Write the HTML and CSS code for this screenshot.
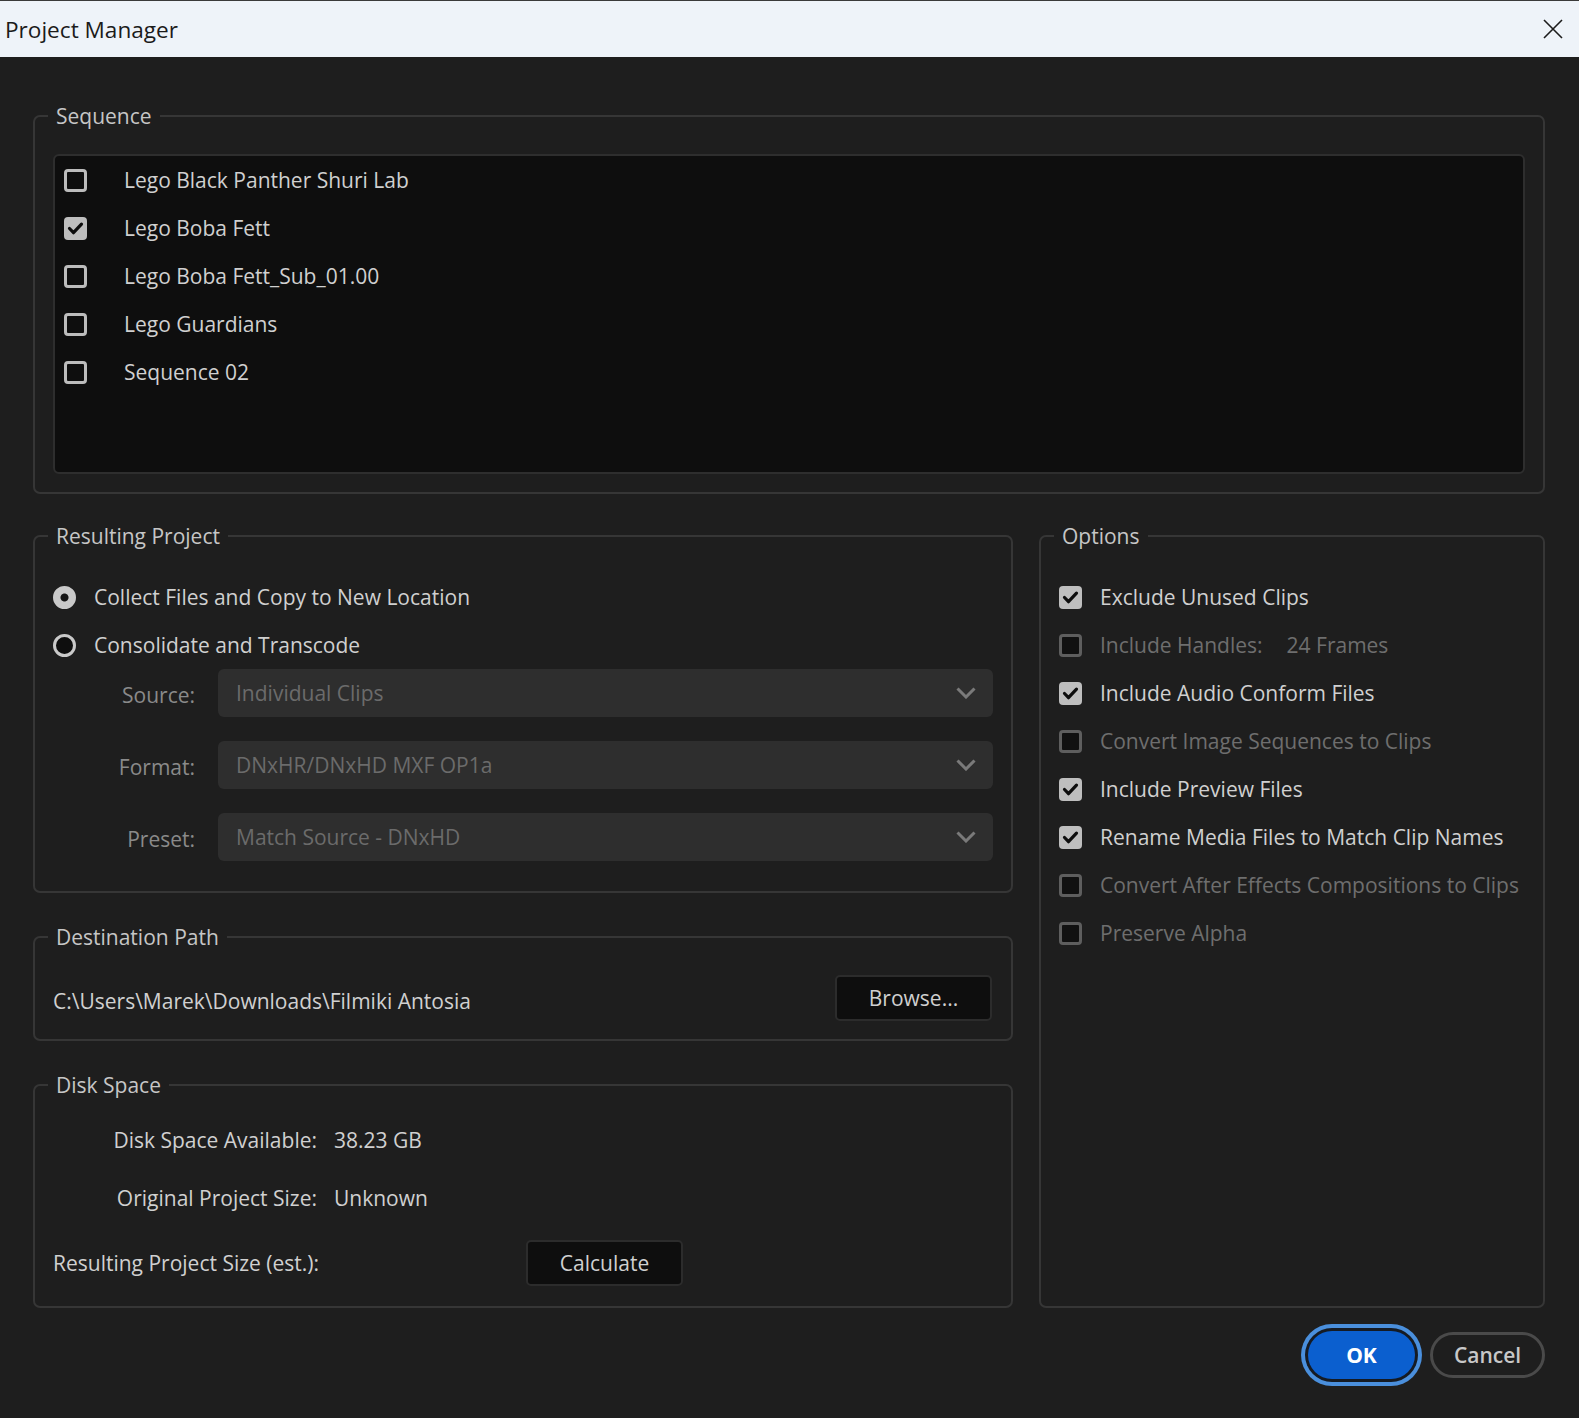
FILE: index.html
```html
<!DOCTYPE html>
<html lang="en">
<head>
  <meta charset="UTF-8" />
  <meta name="viewport" content="width=device-width, initial-scale=1" />
  <title>Project Manager</title>
  <link rel="stylesheet" href="styles.css">
</head>
<body>
  <div class="titlebar">
    <span class="title">Project Manager</span>
    <svg class="close" viewBox="0 0 20 20" width="20" height="20">
      <path d="M1 1L19 19M19 1L1 19" />
    </svg>
  </div>

  <div class="dialog">
    <fieldset class="group seq">
      <legend>Sequence</legend>
      <div class="seq-list">
        <div class="seq-row"><span class="cb"></span><span>Lego Black Panther Shuri Lab</span></div>
        <div class="seq-row"><span class="cb checked"><svg viewBox="0 0 23 23"><path d="M5.5 11.5l4 4.2 8-8.6" /></svg></span><span>Lego Boba Fett</span></div>
        <div class="seq-row"><span class="cb"></span><span>Lego Boba Fett_Sub_01.00</span></div>
        <div class="seq-row"><span class="cb"></span><span>Lego Guardians</span></div>
        <div class="seq-row"><span class="cb"></span><span>Sequence 02</span></div>
      </div>
    </fieldset>

    <div class="lower">
      <div class="left-col">
        <fieldset class="group result">
          <legend>Resulting Project</legend>
          <div class="radio-row"><span class="radio on"></span><span>Collect Files and Copy to New Location</span></div>
          <div class="radio-row"><span class="radio"></span><span>Consolidate and Transcode</span></div>
          <div class="field-row">
            <span class="field-label">Source:</span>
            <div class="select"><span>Individual Clips</span><svg class="chev" viewBox="0 0 20 12"><path d="M1.5 1.5L10 10l8.5-8.5" /></svg></div>
          </div>
          <div class="field-row">
            <span class="field-label">Format:</span>
            <div class="select"><span>DNxHR/DNxHD MXF OP1a</span><svg class="chev" viewBox="0 0 20 12"><path d="M1.5 1.5L10 10l8.5-8.5" /></svg></div>
          </div>
          <div class="field-row">
            <span class="field-label">Preset:</span>
            <div class="select"><span>Match Source - DNxHD</span><svg class="chev" viewBox="0 0 20 12"><path d="M1.5 1.5L10 10l8.5-8.5" /></svg></div>
          </div>
        </fieldset>

        <fieldset class="group dest">
          <legend>Destination Path</legend>
          <div class="dest-row">
            <span>C:\Users\Marek\Downloads\Filmiki Antosia</span>
            <button class="btn-dark">Browse...</button>
          </div>
        </fieldset>

        <fieldset class="group disk">
          <legend>Disk Space</legend>
          <div class="disk-row first">
            <span class="disk-label">Disk Space Available:</span>
            <span>38.23 GB</span>
          </div>
          <div class="disk-row second">
            <span class="disk-label">Original Project Size:</span>
            <span>Unknown</span>
          </div>
          <div class="disk-row third">
            <span class="disk-label left">Resulting Project Size (est.):</span>
            <button class="btn-dark calc">Calculate</button>
          </div>
        </fieldset>
      </div>

      <fieldset class="group options">
        <legend>Options</legend>
        <div class="opt-row"><span class="cb checked"><svg viewBox="0 0 23 23"><path d="M5.5 11.5l4 4.2 8-8.6" /></svg></span><span>Exclude Unused Clips</span></div>
        <div class="opt-row dim"><span class="cb off"></span><span>Include Handles:</span><span class="frames">24 Frames</span></div>
        <div class="opt-row"><span class="cb checked"><svg viewBox="0 0 23 23"><path d="M5.5 11.5l4 4.2 8-8.6" /></svg></span><span>Include Audio Conform Files</span></div>
        <div class="opt-row dim"><span class="cb off"></span><span>Convert Image Sequences to Clips</span></div>
        <div class="opt-row"><span class="cb checked"><svg viewBox="0 0 23 23"><path d="M5.5 11.5l4 4.2 8-8.6" /></svg></span><span>Include Preview Files</span></div>
        <div class="opt-row"><span class="cb checked"><svg viewBox="0 0 23 23"><path d="M5.5 11.5l4 4.2 8-8.6" /></svg></span><span>Rename Media Files to Match Clip Names</span></div>
        <div class="opt-row dim"><span class="cb off"></span><span>Convert After Effects Compositions to Clips</span></div>
        <div class="opt-row dim"><span class="cb off"></span><span>Preserve Alpha</span></div>
      </fieldset>
    </div>

    <div class="buttons">
      <button class="btn-ok">OK</button>
      <button class="btn-cancel">Cancel</button>
    </div>
  </div>
</body>
</html>
```

FILE: styles.css
```css
body {
  margin: 0;
  background: #1e1e1e;
  font-family: "Open Sans", "Noto Sans", sans-serif;
  font-size: 21px;
  color: #d0d0d0;
  width: 1579px;
  height: 1418px;
  overflow: hidden;
}
.titlebar {
  height: 56px;
  border-top: 1px solid #3a3a3a;
  background: #eef3f9;
  display: flex;
  align-items: center;
  justify-content: space-between;
  padding: 0 16px 0 5px;
}
.title {
  font-size: 22.6px;
  color: #1b1b1b;
  font-family: "Open Sans", sans-serif;
}
.close {
  stroke: #1c1c1c;
  stroke-width: 1.6;
  fill: none;
}
.dialog {
  padding: 47px 34px 0 33px;
}

/* group boxes */
.group {
  margin: 0;
  border: 2px solid #363636;
  border-radius: 7px;
  padding: 25px 18px 18px 18px;
  min-width: 0;
}
.group legend {
  padding: 0 8px;
  margin-left: -5px;
  font-size: 21px;
  line-height: 24px;
  color: #c6c6c6;
}
.seq {
  padding-top: 26px;
}
.seq-list {
  height: 316px;
  background: #0e0e0e;
  border: 2px solid #2e2e2e;
  border-radius: 6px;
  padding: 0 0 0 9px;
}
.seq-row, .opt-row, .radio-row {
  display: flex;
  align-items: center;
  height: 48px;
}
.seq-row .cb {
  margin-right: 37px;
}

/* checkbox + radio */
.cb {
  width: 23px;
  height: 23px;
  box-sizing: border-box;
  border: 3px solid #bcbcbc;
  border-radius: 4px;
  background: #0e0e0e;
  flex-shrink: 0;
}
.cb.checked {
  border: none;
  background: #bebebe;
}
.cb svg {
  display: block;
  width: 23px;
  height: 23px;
  fill: none;
  stroke: #0d0d0d;
  stroke-width: 3.2;
  stroke-linecap: round;
  stroke-linejoin: round;
}
.cb.off {
  border-color: #5e5e5e;
  background: #111;
}
.radio {
  width: 23px;
  height: 23px;
  box-sizing: border-box;
  border-radius: 50%;
  border: 3px solid #c9c9c9;
  background: #0e0e0e;
  margin-right: 18px;
  flex-shrink: 0;
}
.radio.on {
  background: radial-gradient(circle, #151515 0 3.5px, #c9c9c9 4.5px);
}

/* lower section */
.lower {
  margin-top: 30px;
  display: grid;
  grid-template-columns: 980px 506px;
  column-gap: 26px;
}
.left-col {
  display: flex;
  flex-direction: column;
  gap: 32px;
}
.result {
  padding-bottom: 30px;
}
.field-row {
  display: flex;
  align-items: center;
  height: 48px;
  margin-bottom: 24px;
}
.field-row:last-child {
  margin-bottom: 0;
}
.field-label {
  width: 142px;
  text-align: right;
  margin-right: 23px;
  color: #8a8a8a;
  padding-top: 4px;
}
.select {
  flex: 1;
  height: 48px;
  background: #2e2e2e;
  border-radius: 6px;
  display: flex;
  align-items: center;
  justify-content: space-between;
  padding: 0 17px 0 18px;
  color: #6b6b6b;
}
.chev {
  width: 20px;
  height: 12px;
  fill: none;
  stroke: #7a7a7a;
  stroke-width: 3;
}

.dest {
  padding-top: 26px;
}
.dest-row {
  display: flex;
  align-items: center;
  justify-content: space-between;
  padding-right: 1px;
}
.dest-row span {
  padding-top: 6px;
}
.btn-dark {
  width: 157px;
  height: 46px;
  background: #0e0e0e;
  border: 2px solid #2c2c2c;
  border-radius: 5px;
  color: #d0d0d0;
  font-family: inherit;
  font-size: 21px;
  padding: 0;
}

.disk {
  padding-top: 21px;
  padding-bottom: 20px;
}
.disk-row {
  display: flex;
  align-items: center;
}
.disk-row.first, .disk-row.second {
  height: 44px;
}
.disk-row.second {
  margin-top: 14px;
}
.disk-row.third {
  margin-top: 20px;
}
.disk-label {
  width: 264px;
  flex-shrink: 0;
  white-space: nowrap;
  text-align: right;
  margin-right: 17px;
}
.disk-label.left {
  text-align: left;
  margin-right: 0;
}
.calc {
  margin-left: 209px;
  flex-shrink: 0;
}

.options .opt-row .cb {
  margin-right: 18px;
}
.opt-row.dim {
  color: #6e6e6e;
}
.frames {
  margin-left: 24px;
}

/* bottom buttons */
.buttons {
  display: flex;
  justify-content: flex-end;
  align-items: center;
  margin-top: 23px;
  gap: 15px;
}
.btn-ok {
  width: 107px;
  height: 48px;
  border: none;
  border-radius: 24px;
  background: #0b5fcf;
  box-shadow: 0 0 0 3px #151b24, 0 0 0 7px #4a8fdc;
  color: #fff;
  font-family: inherit;
  font-size: 21px;
  font-weight: 700;
}
.btn-cancel {
  width: 115px;
  height: 46px;
  border: 3px solid #4a4a4a;
  border-radius: 23px;
  background: transparent;
  color: #c8c8c8;
  font-family: inherit;
  font-size: 21px;
  font-weight: 600;
}
```
